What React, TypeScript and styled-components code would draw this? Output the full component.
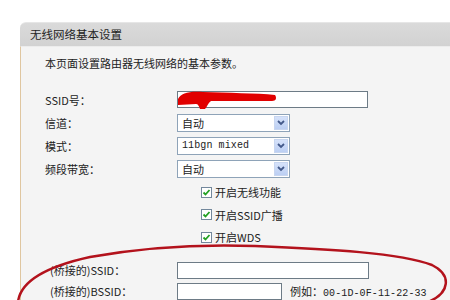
import React from 'react'
import styled, { createGlobalStyle } from 'styled-components'

const GlobalStyle = createGlobalStyle`
  html, body {
    margin: 0;
    padding: 0;
    background: #ffffff;
    overflow: hidden;
  }
  body {
    font-family: "Noto Sans CJK SC", "Noto Sans", sans-serif;
    font-size: 11px;
    color: #222222;
  }
`

const Page = styled.div`
  position: relative;
  width: 450px;
  height: 300px;
  overflow: hidden;
  padding-top: 22px;
  box-sizing: border-box;
`

const Panel = styled.div`
  margin-left: 20px;
  display: flex;
  flex-direction: column;
`

const PanelHeader = styled.div`
  height: 23px;
  line-height: 23px;
  padding-left: 10px;
  background: linear-gradient(#dadada, #d2d2d2);
  border-top: 1px solid #e6e6e6;
  border-radius: 6px 0 0 0;
  font-size: 11.5px;
  color: #1e1e1e;
`

const PanelBody = styled.div`
  background: #f4f4f4;
  border-left: 1px solid #dfc6a0;
  border-top: 1px solid #ececec;
  padding: 5px 0 0 24px;
  height: 260px;
`

const Intro = styled.div`
  height: 23px;
  line-height: 23px;
  margin-bottom: 13px;
`

const Row = styled.div<{ $h?: number; $indent?: number }>`
  display: grid;
  grid-template-columns: 132px 1fr;
  align-items: center;
  height: ${(p) => p.$h ?? 23}px;
  & > span:first-child {
    padding-left: ${(p) => p.$indent ?? 0}px;
  }
`

const Label = styled.span`
  white-space: nowrap;
`

const Controls = styled.div`
  display: flex;
  align-items: center;
  gap: 8px;
`

const TextBox = styled.div<{ $w: number; $h?: number }>`
  position: relative;
  width: ${(p) => p.$w}px;
  height: ${(p) => p.$h ?? 17}px;
  box-sizing: border-box;
  background: #ffffff;
  border: 1px solid #6d7b86;
`

const Select = styled.div`
  width: 113px;
  height: 18px;
  box-sizing: border-box;
  background: #ffffff;
  border: 1px solid #8ea3b8;
  display: flex;
  align-items: center;
  justify-content: space-between;
  padding-left: 4px;
`

const SelectArrow = styled.div`
  width: 14px;
  height: 14px;
  margin-right: 1px;
  background: linear-gradient(#d6e2fa, #bccff3);
  border: 1px solid #c8d6f0;
  box-sizing: border-box;
  display: flex;
  align-items: center;
  justify-content: center;
`

const Mono = styled.span`
  font-family: "Liberation Mono", "DejaVu Sans Mono", monospace;
  font-size: 10px;
  letter-spacing: 0.1px;
`

const CheckRow = styled.label`
  display: flex;
  align-items: center;
  gap: 3px;
  height: 22.5px;
  margin-left: 156px;
`

const CheckBox = styled.span`
  width: 11px;
  height: 11px;
  box-sizing: border-box;
  border: 1px solid #73889c;
  background: #ffffff;
  display: flex;
  align-items: center;
  justify-content: center;
`

const CheckGroup = styled.div`
  margin-top: 1px;
  margin-bottom: 11px;
`

const Hint = styled.span`
  white-space: nowrap;
`

const Overlay = styled.svg`
  position: absolute;
  left: 0;
  top: 0;
  pointer-events: none;
`

const Scribble = styled.svg`
  position: absolute;
  left: -1px;
  top: -2px;
  width: 100px;
  height: 20px;
  pointer-events: none;
`

const Chevron = () => (
  <svg width="8" height="6" viewBox="0 0 8 6">
    <path d="M1 1 L4 4 L7 1" fill="none" stroke="#43598a" strokeWidth="1.8" />
  </svg>
)

const Check = () => (
  <svg width="9" height="9" viewBox="0 0 9 9">
    <path d="M1.5 4.5 L3.5 6.5 L7.5 2" fill="none" stroke="#22a022" strokeWidth="1.8" />
  </svg>
)

const checks = ['开启无线功能', '开启SSID广播', '开启WDS']

export default function App() {
  return (
    <>
      <GlobalStyle />
      <Page>
        <Panel>
          <PanelHeader>无线网络基本设置</PanelHeader>
          <PanelBody>
            <Intro>本页面设置路由器无线网络的基本参数。</Intro>
            <Row>
              <Label>SSID号：</Label>
              <Controls>
                <TextBox $w={191}>
                  <Scribble viewBox="0 0 100 20">
                    <path
                      d="M1 9 C 4 3, 12 1, 26 2 C 50 3, 80 3, 98 5 C 100 8, 99 11, 95 11 L 34 11 C 31 13, 30 17, 28 19 L 23 19 C 22 16, 21 14, 19 14 L 1 15 Z"
                      fill="#e10000"
                    />
                  </Scribble>
                </TextBox>
              </Controls>
            </Row>
            <Row>
              <Label>信道：</Label>
              <Controls>
                <Select>
                  自动
                  <SelectArrow><Chevron /></SelectArrow>
                </Select>
              </Controls>
            </Row>
            <Row>
              <Label>模式：</Label>
              <Controls>
                <Select>
                  <Mono>11bgn mixed</Mono>
                  <SelectArrow><Chevron /></SelectArrow>
                </Select>
              </Controls>
            </Row>
            <Row>
              <Label>频段带宽：</Label>
              <Controls>
                <Select>
                  自动
                  <SelectArrow><Chevron /></SelectArrow>
                </Select>
              </Controls>
            </Row>
            <CheckGroup>
              {checks.map((c) => (
                <CheckRow key={c}>
                  <CheckBox><Check /></CheckBox>
                  {c}
                </CheckRow>
              ))}
            </CheckGroup>
            <Row $h={21} $indent={5}>
              <Label>(桥接的)SSID：</Label>
              <Controls>
                <TextBox $w={192} $h={17} />
              </Controls>
            </Row>
            <Row $h={21} $indent={5}>
              <Label>(桥接的)BSSID：</Label>
              <Controls>
                <TextBox $w={105} $h={17} />
                <Hint>例如：<Mono>00-1D-0F-11-22-33</Mono></Hint>
              </Controls>
            </Row>
          </PanelBody>
        </Panel>
        <Overlay width="450" height="300" viewBox="0 0 450 300">
          <path
            d="M18 302 C 20 284, 40 268, 90 257 C 140 248, 200 244, 255 246 C 330 249, 400 253, 432 265 C 452 275, 450 293, 428 302"
            fill="none"
            stroke="#b3121c"
            strokeWidth="2.5"
            strokeLinecap="round"
          />
        </Overlay>
      </Page>
    </>
  )
}
